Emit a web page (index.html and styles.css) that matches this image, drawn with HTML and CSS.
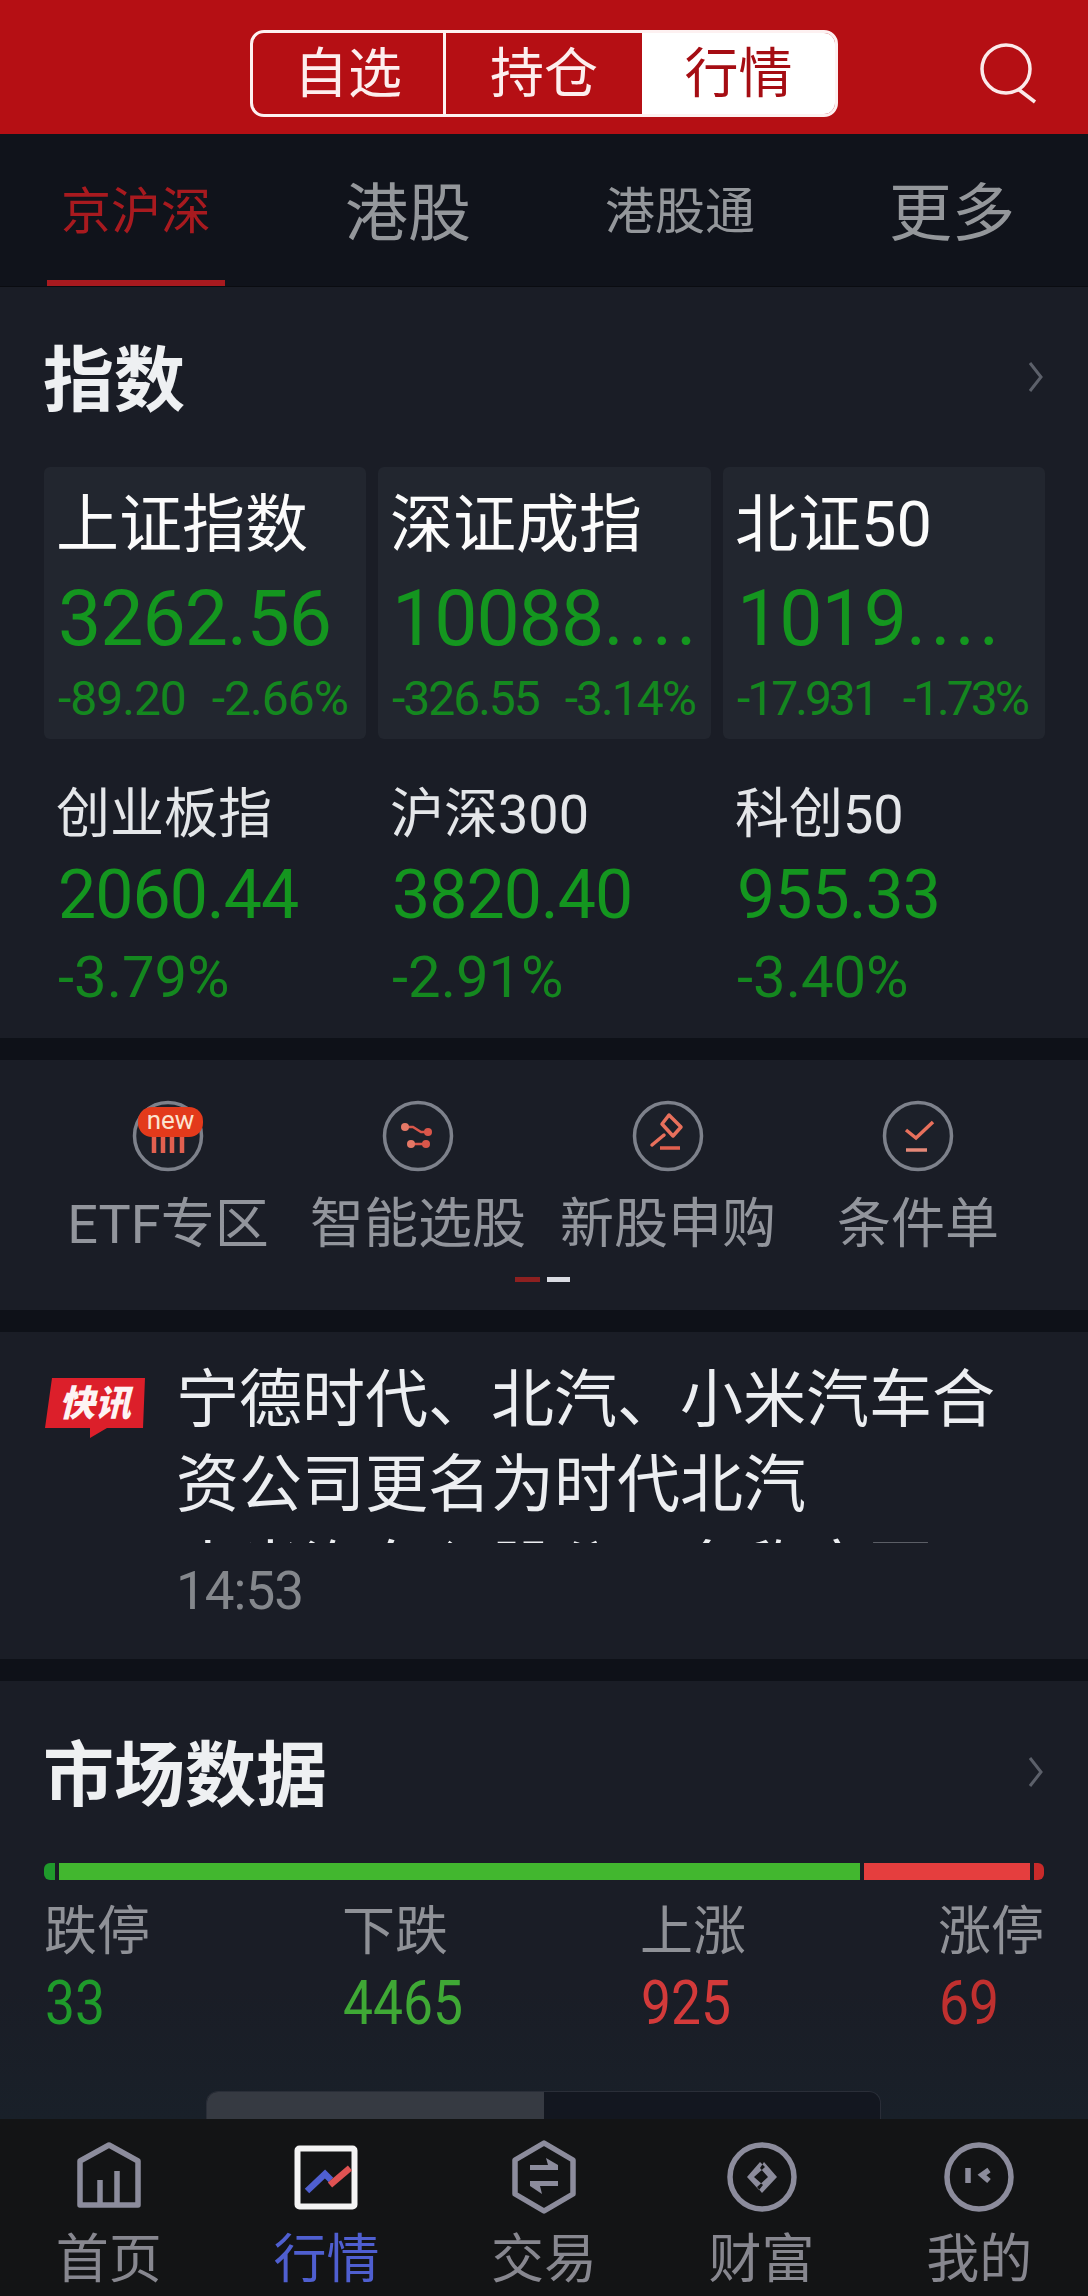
FILE: index.html
```html
<!DOCTYPE html>
<html lang="zh-CN">
<head>
<meta charset="utf-8">
<title>行情</title>
<link rel="stylesheet" href="styles.css">
</head>
<body>
<div class="page">
  <header class="topbar">
    <div class="segment">
      <div class="seg seg-a">自选</div>
      <div class="seg seg-b">持仓</div>
      <div class="seg seg-c">行情</div>
    </div>
    <svg class="search" width="60" height="62" viewBox="0 0 60 62"><circle cx="28" cy="27" r="24" fill="none" stroke="#fbeaea" stroke-width="3.5"/><path d="M40 47 57 60" fill="none" stroke="#fbeaea" stroke-width="3.5"/></svg>
  </header>

  <nav class="tabs">
    <div class="tab tab-on"><span class="tab-s">京沪深</span></div>
    <div class="tab"><span class="tab-l">港股</span></div>
    <div class="tab"><span class="tab-s">港股通</span></div>
    <div class="tab"><span class="tab-l">更多</span></div>
  </nav>

  <section class="panel index-panel">
    <div class="head">
      <h2 class="title title-index">指数</h2>
      <svg class="chev" width="16" height="30" viewBox="0 0 16 30"><path d="M2 1 13 15 2 29" fill="none" stroke="#5c606a" stroke-width="3"/></svg>
    </div>
    <div class="index-grid">
      <div class="card">
        <div class="card-name">上证指数</div>
        <div class="card-num">3262.56</div>
        <div class="card-delta delta-a"><span>-89.20</span><span>-2.66%</span></div>
      </div>
      <div class="card">
        <div class="card-name">深证成指</div>
        <div class="card-num">10088<span class="dots">....</span></div>
        <div class="card-delta delta-b"><span>-326.55</span><span>-3.14%</span></div>
      </div>
      <div class="card">
        <div class="card-name">北证50</div>
        <div class="card-num">1019<span class="dots">....</span></div>
        <div class="card-delta delta-c"><span>-17.931</span><span>-1.73%</span></div>
      </div>
      <div class="cell">
        <div class="cell-name">创业板指</div>
        <div class="cell-num">2060.44</div>
        <div class="cell-delta">-3.79%</div>
      </div>
      <div class="cell">
        <div class="cell-name">沪深300</div>
        <div class="cell-num">3820.40</div>
        <div class="cell-delta">-2.91%</div>
      </div>
      <div class="cell">
        <div class="cell-name">科创50</div>
        <div class="cell-num">955.33</div>
        <div class="cell-delta">-3.40%</div>
      </div>
    </div>
  </section>

  <section class="panel shortcuts">
    <div class="shortcut-row">
      <div class="shortcut">
        <div class="badge-wrap">
          <svg width="72" height="72" viewBox="0 0 72 72"><circle cx="36" cy="36" r="33.5" fill="#1c2029" stroke="#7d818b" stroke-width="3.5"/><path d="M22 36V53M31 36V53M40 36V53M50 36V53" stroke="#e2604f" stroke-width="4.5" fill="none"/></svg>
          <span class="new">new</span>
        </div>
        <div class="shortcut-label">ETF专区</div>
      </div>
      <div class="shortcut">
        <svg width="72" height="72" viewBox="0 0 72 72"><circle cx="36" cy="36" r="33.5" fill="#1c2029" stroke="#7d818b" stroke-width="3.5"/><path d="M23 27H31L39 32H46M29 44H44" stroke="#d9564a" stroke-width="2.5" fill="none"/><circle cx="23" cy="27" r="4" fill="#e57866"/><circle cx="46" cy="32" r="4" fill="#d9564a"/><circle cx="29" cy="44" r="4" fill="#e57866"/><circle cx="44" cy="44" r="4" fill="#d9564a"/></svg>
        <div class="shortcut-label">智能选股</div>
      </div>
      <div class="shortcut">
        <svg width="72" height="72" viewBox="0 0 72 72"><circle cx="36" cy="36" r="33.5" fill="#1c2029" stroke="#7d818b" stroke-width="3.5"/><path d="M37 15 49 27 41 36 30 24Z" fill="none" stroke="#e8705c" stroke-width="3.5" stroke-linejoin="round"/><path d="M32 35 20 45" stroke="#e8705c" stroke-width="3.5" fill="none" stroke-linecap="round"/><path d="M28 48H48" stroke="#e2604f" stroke-width="3.5" fill="none"/></svg>
        <div class="shortcut-label">新股申购</div>
      </div>
      <div class="shortcut">
        <svg width="72" height="72" viewBox="0 0 72 72"><circle cx="36" cy="36" r="33.5" fill="#1c2029" stroke="#7d818b" stroke-width="3.5"/><path d="M24 30 34 38 51 22" stroke="#e8705c" stroke-width="3.5" fill="none"/><path d="M24 50H45" stroke="#e58878" stroke-width="3.5" fill="none"/></svg>
        <div class="shortcut-label">条件单</div>
      </div>
    </div>
    <div class="pager"><span class="pager-on"></span><span class="pager-off"></span></div>
  </section>

  <section class="panel news">
    <svg class="news-badge" width="102" height="62" viewBox="0 0 102 62">
      <path d="M7 0H100L98 50H62L45 60V50H0Z" fill="#dc1f2a"/>
      <text class="news-badge-text" x="14" y="38">快讯</text>
    </svg>
    <div class="news-body">
      <div class="news-clip">
        <p class="news-text">宁德时代、北汽、小米汽车合资公司更名为时代北汽</p>
        <p class="news-text news-more">小米汽车入股公司名称变更</p>
      </div>
      <div class="news-time">14:53</div>
    </div>
  </section>

  <section class="panel market">
    <div class="head head-market">
      <h2 class="title title-market">市场数据</h2>
      <svg class="chev" width="16" height="30" viewBox="0 0 16 30"><path d="M2 1 13 15 2 29" fill="none" stroke="#5c606a" stroke-width="3"/></svg>
    </div>
    <div class="bar">
      <span class="seg-limit-down"></span>
      <span class="seg-down"></span>
      <span class="seg-up"></span>
      <span class="seg-limit-up"></span>
    </div>
    <div class="stats">
      <div class="stat"><div class="stat-name">跌停</div><div class="stat-num is-green">33</div></div>
      <div class="stat"><div class="stat-name">下跌</div><div class="stat-num is-lime">4465</div></div>
      <div class="stat"><div class="stat-name">上涨</div><div class="stat-num is-red">925</div></div>
      <div class="stat"><div class="stat-name">涨停</div><div class="stat-num is-deep">69</div></div>
    </div>
    <div class="thumb"><span class="thumb-on"></span></div>
  </section>

  <footer class="nav">
    <div class="nav-item">
      <svg width="80" height="76" viewBox="0 0 80 76"><path d="M11 22 40 6 69 22V66H11Z" fill="none" stroke="#8c8c9c" stroke-width="5.5" stroke-linejoin="round"/><path d="M31 41V66M48 32V66" stroke="#8c8c9c" stroke-width="5.5" fill="none"/></svg>
      <div class="nav-label">首页</div>
    </div>
    <div class="nav-item nav-on">
      <svg width="80" height="76" viewBox="0 0 80 76"><rect x="11.5" y="9.5" width="57" height="58" rx="2" fill="#131415" stroke="#f4f4f4" stroke-width="6"/><path d="M21 52 39 35 45 41" fill="none" stroke="#4f5fd0" stroke-width="6.5"/><path d="M44 46 64 29" fill="none" stroke="#e05252" stroke-width="6.5"/></svg>
      <div class="nav-label">行情</div>
    </div>
    <div class="nav-item">
      <svg width="80" height="76" viewBox="0 0 80 76"><path d="M40 4 69 21V55L40 72 11 55V21Z" fill="none" stroke="#8c8c9c" stroke-width="5.5" stroke-linejoin="round"/><path d="M26 31H54V26L42 19 44 26H26ZM54 42H26V47L38 55 36 47H54Z" fill="#8c8c9c"/></svg>
      <div class="nav-label">交易</div>
    </div>
    <div class="nav-item">
      <svg width="80" height="76" viewBox="0 0 80 76"><circle cx="40" cy="38" r="32" fill="none" stroke="#8c8c9c" stroke-width="5.5"/><path d="M42 23 55 38 40 54 35 48 46 38 38 29ZM38 23 25 38 37 51 41 46 32 38 43 28Z" fill="#8c8c9c"/></svg>
      <div class="nav-label">财富</div>
    </div>
    <div class="nav-item">
      <svg width="80" height="76" viewBox="0 0 80 76"><circle cx="40" cy="38" r="32" fill="none" stroke="#8c8c9c" stroke-width="5.5"/><path d="M29 29V44" stroke="#8c8c9c" stroke-width="5.5" fill="none"/><path d="M50 31 43 36 50 42" stroke="#8c8c9c" stroke-width="5.5" fill="none"/></svg>
      <div class="nav-label">我的</div>
    </div>
  </footer>
</div>
</body>
</html>
```
FILE: styles.css
```css
* { box-sizing: border-box; }
html, body { margin: 0; padding: 0; background: #0e1118; }
body { font-family: Roboto, "Noto Sans CJK SC", sans-serif; }
p, h2 { margin: 0; }
svg { display: block; }

.page {
  width: 1088px;
  height: 2296px;
  overflow: hidden;
  display: flex;
  flex-direction: column;
}

/* top bar */
.topbar {
  height: 134px;
  flex: none;
  background: #b50f14;
  display: flex;
  align-items: flex-start;
  padding: 30px 0 0 250px;
}
.segment {
  width: 588px;
  height: 87px;
  border: 3px solid #fdf1f1;
  border-radius: 14px;
  display: flex;
  overflow: hidden;
  color: #fdeeee;
  font-size: 54px;
  line-height: 83px;
  text-align: center;
}
.seg { height: 100%; }
.seg-a { width: 193px; border-right: 3px solid #fdf1f1; }
.seg-b { width: 196px; }
.seg-c { flex: 1; background: #fff; color: #a50d13; }
.search { margin: 12px 0 0 140px; }

/* tabs */
.tabs {
  height: 153px;
  flex: none;
  background: #10131b;
  display: grid;
  grid-template-columns: repeat(4, 1fr);
  align-items: stretch;
  border-bottom: 1px solid #0a0c11;
}
.tab {
  position: relative;
  display: flex;
  align-items: center;
  justify-content: center;
  padding-bottom: 6px;
  color: #94979b;
}
.tab-s { font-size: 50px; }
.tab-l { font-size: 63px; }
.tab-on { color: #a81a1f; }
.tab-on::after {
  content: "";
  position: absolute;
  left: 47px;
  width: 178px;
  bottom: 0;
  height: 6px;
  background: #a81a1f;
}

/* panels */
.panel { background: #1a1d26; flex: none; }
.head {
  height: 180px;
  padding: 0 44px 7px 43px;
  display: flex;
  align-items: center;
  justify-content: space-between;
}
.chev { margin-top: 7px; }
.title { color: #eef0f2; font-weight: 700; }
.title-index { font-size: 71px; }
.title-market { font-size: 71px; }

/* index */
.index-panel { height: 751px; }
.index-grid {
  display: grid;
  grid-template-columns: 322px 333px 322px;
  column-gap: 12px;
  margin: 0 44px;
}
.card {
  height: 272px;
  padding: 27px 0 0 12px;
  background: #22262f;
  border-radius: 6px;
}
.card-name { font-size: 63px; line-height: 62px; color: #fbfbfb; white-space: nowrap; }
.card-num {
  margin-top: 18px;
  padding-left: 2px;
  font-size: 77px;
  line-height: 90px;
  color: #14961f;
  letter-spacing: -1px;
  white-space: nowrap;
}
.dots { letter-spacing: 4px; }
.card-delta {
  margin-top: 10px;
  padding-left: 2px;
  font-size: 48px;
  line-height: 50px;
  color: #14871f;
  white-space: nowrap;
  display: flex;
  gap: 26px;
}
.delta-a { letter-spacing: -1px; }
.delta-b { letter-spacing: -2px; }
.delta-c { letter-spacing: -3px; }
.cell { padding: 46px 0 0 12px; }
.cell-name { font-size: 54px; line-height: 60px; color: #e4e6e9; white-space: nowrap; }
.cell-num {
  margin-top: 10px;
  padding-left: 2px;
  font-size: 68px;
  line-height: 80px;
  color: #14961f;
  letter-spacing: -1px;
}
.cell-delta {
  margin-top: 12px;
  padding-left: 2px;
  font-size: 58px;
  line-height: 60px;
  color: #14871f;
}

/* shortcuts */
.shortcuts { margin-top: 22px; height: 250px; padding: 40px 45px 0 43px; }
.shortcut-row { display: grid; grid-template-columns: repeat(4, 250px); }
.shortcut { display: flex; flex-direction: column; align-items: center; }
.badge-wrap { position: relative; }
.new {
  position: absolute;
  left: 6px;
  top: 7px;
  width: 65px;
  height: 30px;
  border-radius: 14px;
  background: #e33a1b;
  color: #fbe3d0;
  font-size: 26px;
  line-height: 26px;
  text-align: center;
}
.shortcut-label {
  margin-top: 23px;
  font-size: 54px;
  line-height: 60px;
  color: #92959c;
  white-space: nowrap;
}
.pager {
  margin-top: 22px;
  display: flex;
  justify-content: center;
  gap: 7px;
  transform: translateX(-1px);
}
.pager span { display: block; height: 5px; }
.pager-on { width: 25px; background: #8e2020; }
.pager-off { width: 23px; background: #d9dbe2; }

/* news */
.news {
  margin-top: 22px;
  height: 327px;
  display: flex;
  padding: 22px 0 0 45px;
}
.news-badge { margin: 24px 29px 0 0; flex: none; }
.news-badge-text {
  font-size: 36px;
  font-weight: 900;
  font-style: italic;
  fill: #fdf3f3;
}
.news-clip { height: 189px; padding-top: 3px; overflow: hidden; }
.news-text { font-size: 63px; line-height: 85px; color: #eceef1; width: 830px; }
.news-more { margin-top: 1px; }
.news-time { margin-top: 18px; font-size: 53px; line-height: 60px; color: #84878c; letter-spacing: -1px; }

/* market */
.market {
  margin-top: 22px;
  flex: 1;
  display: flex;
  flex-direction: column;
  background: linear-gradient(#1a1d26, #1a1d26 70%, #192029);
}
.head-market { height: 182px; }
.bar { display: flex; gap: 4px; height: 17px; margin: 0 44px; flex: none; }
.bar span { display: block; height: 100%; }
.seg-limit-down { width: 11px; background: #1f9a2b; border-radius: 6px 0 0 6px; }
.seg-down { width: 801px; background: #42b72f; }
.seg-up { width: 166px; background: #e53e3e; }
.seg-limit-up { flex: 1; background: #c82a2a; border-radius: 0 6px 6px 0; }
.stats {
  display: grid;
  grid-template-columns: repeat(3, 298px) auto;
  margin: 22px 42px 0 44px;
}
.stat-name { font-size: 53px; line-height: 60px; color: #8f9197; white-space: nowrap; }
.stat-num {
  margin: 9px 0 0 1px;
  font-size: 62px;
  line-height: 64px;
  transform: scaleX(0.86);
  transform-origin: left center;
}
.is-green { color: #1f9a2b; }
.is-lime { color: #3fa835; }
.is-red { color: #d33a3a; }
.is-deep { color: #c0302f; }
.thumb {
  margin: auto 0 0 206px;
  width: 675px;
  height: 28px;
  flex: none;
  background: #131720;
  border: 1px solid #2a2e38;
  border-bottom: 0;
  border-radius: 12px 12px 0 0;
  overflow: hidden;
}
.thumb-on { display: block; width: 337px; height: 100%; background: #363a42; }

/* bottom nav */
.nav {
  height: 177px;
  flex: none;
  background: #131415;
  display: grid;
  grid-template-columns: repeat(5, 1fr);
  padding-top: 20px;
}
.nav-item { display: flex; flex-direction: column; align-items: center; }
.nav-label { margin-top: 15px; font-size: 53px; line-height: 60px; color: #87878f; }
.nav-on .nav-label { color: #4f5fd0; }
```
